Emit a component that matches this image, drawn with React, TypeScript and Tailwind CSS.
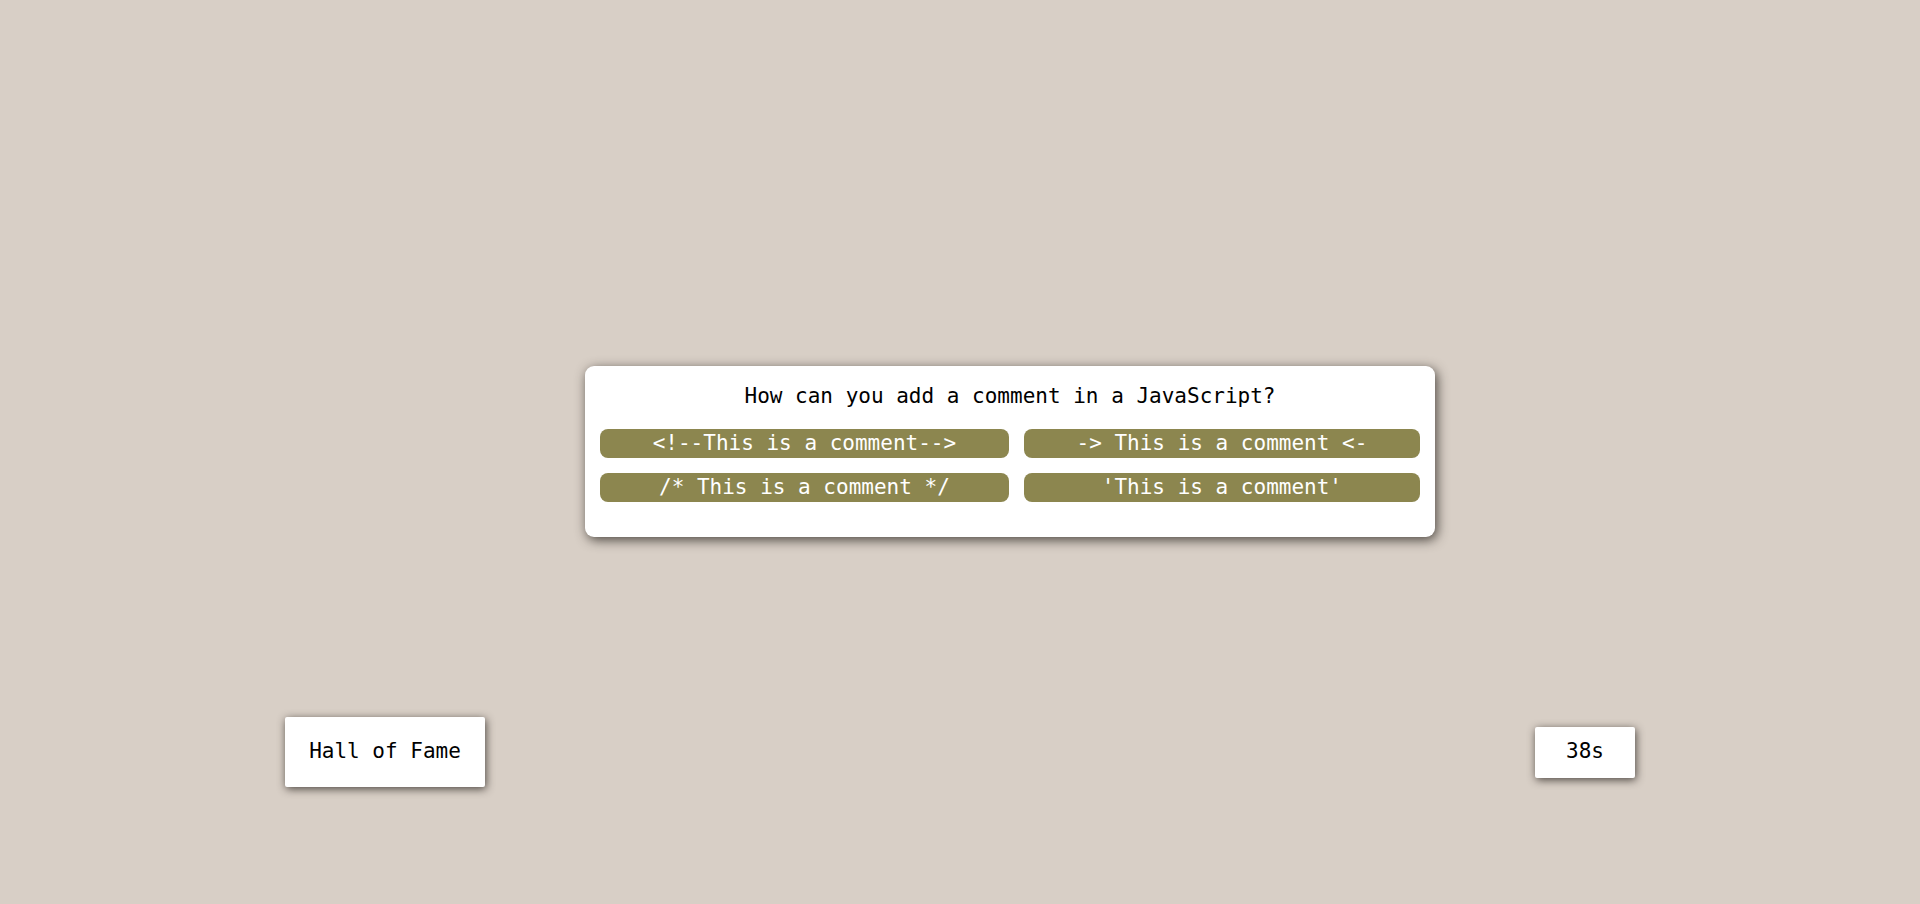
import React from 'react';

const answers = [
  '<!--This is a comment-->',
  '-> This is a comment <-',
  '/* This is a comment */',
  "'This is a comment'",
];

export default function App() {
  return (
    <div
      className="w-full h-screen bg-[#d8cfc6] overflow-hidden"
      style={{ fontFamily: '"DejaVu Sans Mono", "Liberation Mono", monospace' }}
    >
      <div className="pt-[366px]">
        {/* Question card */}
        <div className="ml-[585px] w-[850px] h-[171px] bg-white rounded-[9px] shadow-[2px_3px_12px_rgba(40,35,30,0.8)] px-[15px] pt-[16px]">
          <h1 className="text-center text-[21px] leading-[28px] text-black">
            How can you add a comment in a JavaScript?
          </h1>
          <div className="mt-[19px] grid grid-cols-[auto_auto] gap-[15px]">
            {answers.map((a) => (
              <button
                key={a}
                className="h-[29px] rounded-[8px] bg-[#8c864f] text-white text-[21px] leading-[29px] text-center whitespace-pre px-2"
              >
                {a}
              </button>
            ))}
          </div>
        </div>

        {/* Bottom row */}
        <div className="mt-[180px] pl-[285px] pr-[285px] flex justify-between items-center">
          <button className="w-[200px] h-[70px] bg-white text-black text-[21px] shadow-[1px_2px_9px_rgba(40,35,30,0.8)] rounded-[2px]">
            Hall of Fame
          </button>
          <div className="w-[100px] h-[51px] bg-white text-black text-[21px] flex items-center justify-center shadow-[1px_2px_9px_rgba(40,35,30,0.8)] rounded-[2px]">
            38s
          </div>
        </div>
      </div>
    </div>
  );
}
